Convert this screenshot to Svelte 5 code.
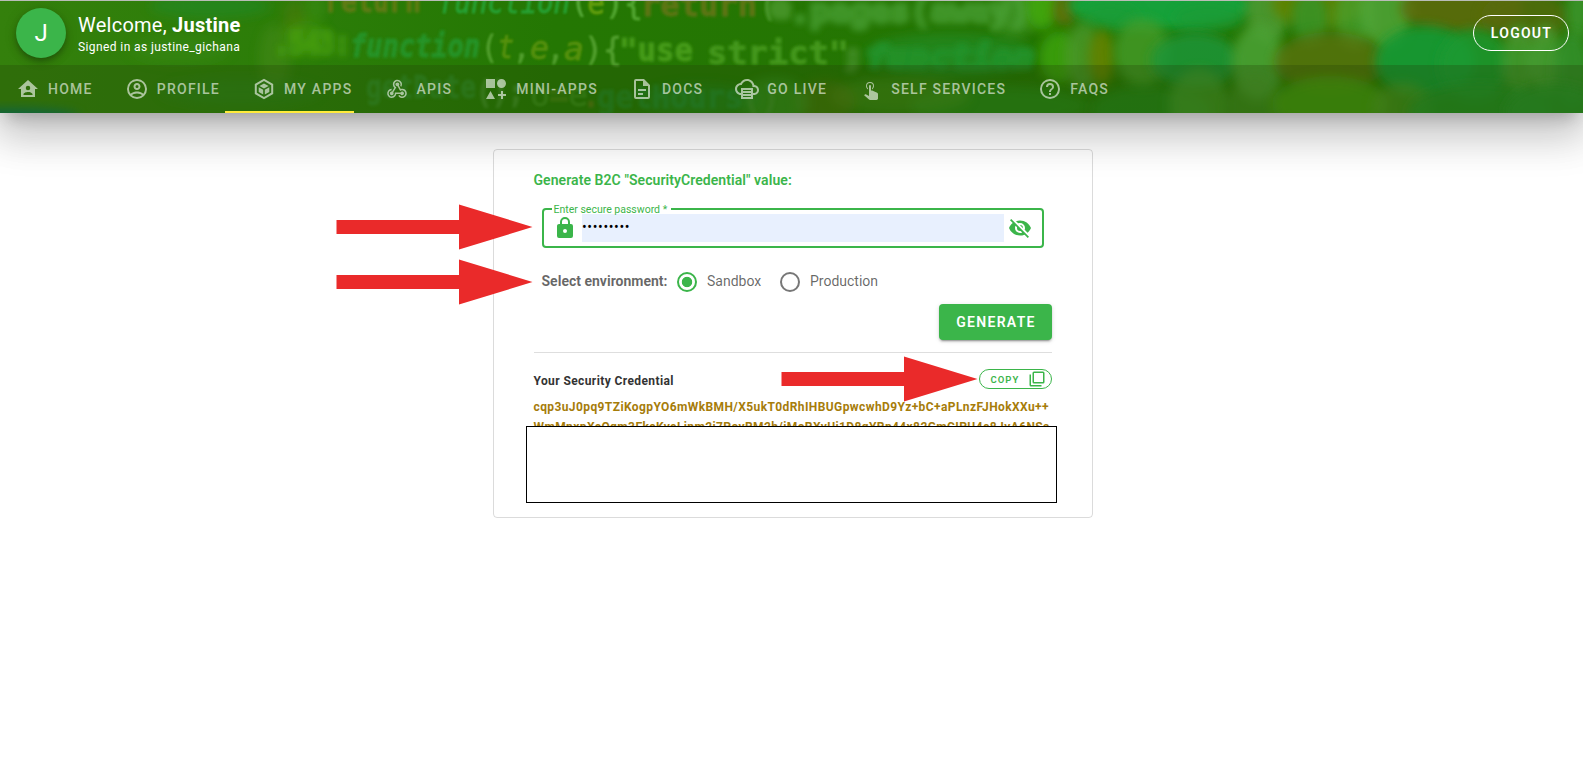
<script>
  const tabs = [
    { label: 'Home', d: 'M12,3L2,12H5V20H19V12H22L12,3M12,8.75A2.25,2.25 0 0,1 14.25,11A2.25,2.25 0 0,1 12,13.25A2.25,2.25 0 0,1 9.75,11A2.25,2.25 0 0,1 12,8.75M12,15C13.5,15 16.5,15.75 16.5,17.25V18H7.5V17.25C7.5,15.75 10.5,15 12,15Z' },
    { label: 'Profile', d: 'M12,2A10,10 0 0,0 2,12A10,10 0 0,0 12,22A10,10 0 0,0 22,12A10,10 0 0,0 12,2M7.07,18.28C7.5,17.38 10.12,16.5 12,16.5C13.88,16.5 16.5,17.38 16.93,18.28C15.57,19.36 13.86,20 12,20C10.14,20 8.43,19.36 7.07,18.28M18.36,16.83C16.93,15.09 13.46,14.5 12,14.5C10.54,14.5 7.07,15.09 5.64,16.83C4.62,15.5 4,13.82 4,12C4,7.59 7.59,4 12,4C16.41,4 20,7.59 20,12C20,13.82 19.38,15.5 18.36,16.83M12,6C10.06,6 8.5,7.56 8.5,9.5C8.5,11.44 10.06,13 12,13C13.94,13 15.5,11.44 15.5,9.5C15.5,7.56 13.94,6 12,6M12,11A1.5,1.5 0 0,1 10.5,9.5A1.5,1.5 0 0,1 12,8A1.5,1.5 0 0,1 13.5,9.5A1.5,1.5 0 0,1 12,11Z' },
    { label: 'My Apps', d: 'M12,1.8L21.2,7V17L12,22.2L2.8,17V7L12,1.8M12,4.1L4.8,8.2V15.8L12,19.9L19.2,15.8V8.2L12,4.1M12,6.4L16.6,8.9L12,11.4L7.4,8.9L12,6.4M6.7,10.2L11.2,12.7V17.5L6.7,14.9V10.2M17.3,10.2V14.9L12.8,17.5V12.7L17.3,10.2Z' },
    { label: 'APIs', d: 'M10.46,19C9,21.07 6.15,21.59 4.09,20.15C2.04,18.71 1.56,15.84 3,13.75C3.87,12.5 5.21,11.83 6.58,11.77L6.63,13.2C5.72,13.27 4.84,13.74 4.27,14.56C3.27,16 3.58,17.94 4.95,18.91C6.33,19.87 8.26,19.5 9.26,18.07C9.57,17.62 9.75,17.13 9.82,16.63V15.62L15.4,15.58L15.47,15.47C16,14.55 17.15,14.23 18.05,14.75C18.95,15.27 19.26,16.43 18.73,17.35C18.2,18.26 17.04,18.58 16.14,18.06C15.73,17.83 15.44,17.46 15.31,17.04L11.24,17.06C11.13,17.73 10.87,18.38 10.46,19M17.74,11.86C20.27,12.17 22.07,14.44 21.76,16.93C21.45,19.43 19.15,21.2 16.62,20.89C15.13,20.71 13.9,19.86 13.19,18.68L14.43,17.96C14.92,18.73 15.75,19.28 16.75,19.41C18.5,19.62 20.05,18.43 20.26,16.76C20.47,15.09 19.23,13.56 17.5,13.35C16.96,13.29 16.44,13.36 15.97,13.53L15.12,13.97L12.54,9.2H12.32C11.26,9.16 10.41,8.29 10.44,7.25C10.47,6.21 11.4,5.4 12.45,5.44C13.5,5.5 14.33,6.35 14.3,7.39C14.28,7.83 14.11,8.23 13.84,8.54L15.74,12.05C16.36,11.85 17.04,11.78 17.74,11.86M8.25,9.14C7.25,6.79 8.31,4.1 10.62,3.12C12.94,2.14 15.62,3.25 16.62,5.6C17.21,6.97 17.09,8.47 16.42,9.67L15.18,8.95C15.6,8.14 15.67,7.15 15.27,6.22C14.59,4.62 12.78,3.85 11.23,4.5C9.67,5.16 8.97,7 9.65,8.6C9.93,9.26 10.4,9.77 10.97,10.11L11.36,10.32L8.29,15.31C8.32,15.36 8.36,15.42 8.39,15.5C8.88,16.41 8.54,17.56 7.62,18.05C6.71,18.54 5.56,18.18 5.06,17.24C4.57,16.31 4.91,15.16 5.83,14.67C6.22,14.46 6.65,14.41 7.06,14.5L9.37,10.73C8.9,10.3 8.5,9.76 8.25,9.14Z' },
    { label: 'Mini-Apps', d: 'M2,2H11V11H2V2M17.5,2C20,2 22,4 22,6.5C22,9 20,11 17.5,11C15,11 13,9 13,6.5C13,4 15,2 17.5,2M6.5,14L11,22H2L6.5,14M19,17H22V19H19V22H17V19H14V17H17V14H19V17Z' },
    { label: 'Docs', d: 'M6,2A2,2 0 0,0 4,4V20A2,2 0 0,0 6,22H18A2,2 0 0,0 20,20V8L14,2H6M6,4H13V9H18V20H6V4M8,12V14H16V12H8M8,16V18H13V16H8Z' },
    { label: 'Go Live', d: 'M19.35,8.03C18.67,4.59 15.64,2 12,2C9.11,2 6.6,3.64 5.35,6.04C2.34,6.36 0,8.91 0,12C0,15.3 2.7,18 6,18V22H18V18H19C21.76,18 24,15.76 24,13C24,10.36 21.95,8.22 19.35,8.03M19,16H18V11H6V16C3.8,16 2,14.2 2,12C2,9.8 3.8,8 6,8H6.7C7.4,5.7 9.5,4 12,4C15,4 17.5,6.5 17.5,9.5V10H19C20.7,10 22,11.3 22,13C22,14.7 20.7,16 19,16M8,13H16V14H8V13M8,16H16V17H8V16M8,19H16V20H8V19Z' },
    { label: 'Self Services', d: 'M10,9A1,1 0 0,1 11,8A1,1 0 0,1 12,9V13.47L13.21,13.6L18.15,15.79C18.68,16.03 19,16.56 19,17.14V21.5C18.97,22.32 18.32,22.97 17.5,23H11C10.62,23 10.26,22.85 10,22.57L5.1,18.37L5.84,17.6C6.03,17.39 6.3,17.28 6.58,17.28H6.8L10,19V9M11,5A4,4 0 0,1 15,9C15,10.5 14.2,11.77 13,12.46V11.24C13.61,10.69 14,9.89 14,9A3,3 0 0,0 11,6A3,3 0 0,0 8,9C8,9.89 8.39,10.69 9,11.24V12.46C7.8,11.77 7,10.5 7,9A4,4 0 0,1 11,5Z' },
    { label: 'FAQs', d: 'M11,18H13V16H11V18M12,2A10,10 0 0,0 2,12A10,10 0 0,0 12,22A10,10 0 0,0 22,12A10,10 0 0,0 12,2M12,20C7.59,20 4,16.41 4,12C4,7.59 7.59,4 12,4C16.41,4 20,7.59 20,12C20,16.41 16.41,20 12,20M12,6A4,4 0 0,0 8,10H10A2,2 0 0,1 12,8A2,2 0 0,1 14,10C14,12 11,11.75 11,15H13C13,12.75 16,12.5 16,10A4,4 0 0,0 12,6Z' }
  ];

  // Out-of-focus source code drawn behind the header: text, x, baseline, width, colour, blur level, italic
  const code = [
    ['return', 325, 12, 96, '#6a7c14', 2, 0],
    ['function', 438, 13, 132, '#28a83c', 1, 1],
    ['(', 571, 12, 17, '#62b344', 1, 0],
    ['e', 587, 14, 18, '#6fa60c', 1, 0],
    ['){', 605, 14, 38, '#5aae38', 1, 0],
    ['return', 641, 16, 116, '#687614', 2, 0],
    ['(', 761, 16, 14, '#4f9c30', 2, 0],
    ['e', 769, 18, 22, '#4f9c30', 3, 0],
    ['.pages(away)', 790, 22, 240, '#4aa034', 3, 0],
    ['.543:', 274, 54, 76, '#479f10', 3, 0],
    ['function', 350, 57, 130, '#25992f', 2, 1],
    ['(', 481, 58, 17, '#5aa636', 1, 0],
    ['t', 498, 58, 16, '#5f960d', 1, 1],
    [',', 513, 59, 17, '#5aa636', 1, 0],
    ['e', 530, 59, 19, '#5f960d', 1, 1],
    [',', 547, 60, 17, '#5aa636', 1, 0],
    ['a', 564, 60, 20, '#5f960d', 1, 1],
    ['){', 584, 60, 38, '#5aa636', 1, 0],
    ['"use', 619, 61, 74, '#4da31d', 2, 0],
    ['strict"', 707, 64, 142, '#4a9d20', 2, 0],
    [';', 840, 67, 26, '#46922b', 3, 0],
    ['function', 866, 68, 168, '#22962e', 3, 1],
    ['getDate', 366, 98, 110, '#36993c', 2, 0],
    ['();', 476, 103, 48, '#55a040', 2, 0],
    ['o', 530, 106, 20, '#4a9c28', 1, 0],
    ['=', 549, 106, 20, '#5c8a18', 2, 0],
    ['e', 568, 106, 20, '#4a9c28', 1, 0],
    ['.', 583, 107, 16, '#7a7a16', 2, 0],
    ['getHours', 597, 108, 146, '#22903a', 2, 0],
    ['()', 742, 109, 38, '#42902b', 2, 0]
  ];

  // Bokeh spots: cx, cy, rx, ry, colour, opacity
  const spots = [
    [210, 6, 60, 12, '#1f8c2e', 0.5], [295, 20, 12, 20, '#64780f', 0.35], [315, 8, 10, 14, '#45951f', 0.4], [275, 58, 16, 34, '#4c8d1e', 0.45],
    [305, 38, 22, 18, '#429807', 0.55], [180, 50, 50, 14, '#398912', 0.5], [240, 92, 80, 14, '#2a8626', 0.35], [10, 117, 70, 8, '#067060', 0.9],
    [1015, 12, 22, 24, '#4ba236', 0.6], [1042, 6, 16, 24, '#43a80c', 0.9], [1065, 10, 12, 16, '#6d7010', 0.8],
    [1160, 5, 92, 25, '#17a43e', 0.95], [1110, 18, 30, 14, '#1a9a35', 0.6], [1210, 18, 36, 14, '#1a9a35', 0.6],
    [950, 55, 85, 22, '#219432', 0.5], [1059, 57, 20, 26, '#3da507', 0.8], [1083, 56, 18, 34, '#4c9829', 0.8], [1102, 57, 13, 28, '#648206', 0.9],
    [1142, 52, 28, 34, '#479e2c', 0.75], [1195, 60, 44, 28, '#1b9539', 0.85], [1000, 106, 90, 20, '#279420', 0.5], [900, 96, 70, 18, '#48911a', 0.5],
    [1268, 10, 22, 32, '#55a13a', 0.75], [1320, 4, 48, 24, '#608202', 0.9], [1310, 18, 18, 28, '#36952a', 0.8], [1354, 17, 20, 32, '#46a332', 0.7], [1386, 12, 26, 38, '#52a83b', 0.8],
    [1462, 8, 62, 26, '#646a0e', 0.8], [1525, 17, 44, 26, '#586b09', 0.75], [1578, 12, 12, 28, '#3a952c', 0.9],
    [1258, 62, 26, 38, '#4ba234', 0.85], [1330, 62, 56, 30, '#5a720c', 0.8], [1425, 62, 50, 36, '#189a35', 0.9], [1475, 65, 36, 36, '#1f9a30', 0.8],
    [1519, 63, 17, 38, '#479f36', 0.75], [1545, 62, 17, 38, '#4ba33b', 0.75], [1572, 70, 18, 38, '#349631', 0.75],
    [1150, 110, 60, 24, '#249326', 0.5], [1199, 105, 30, 36, '#479a2a', 0.65], [1255, 107, 28, 32, '#469326', 0.6],
    [1330, 104, 58, 28, '#449a0d', 0.85], [1402, 108, 30, 26, '#4b9523', 0.65], [1480, 112, 72, 28, '#249126', 0.8], [1555, 112, 50, 28, '#259028', 0.9],
    [825, 102, 30, 22, '#5f750d', 0.4], [775, 102, 34, 24, '#3d9c2b', 0.45], [700, 100, 60, 16, '#1f8c30', 0.35]
  ];

  const arrows = [{ x: 336, y: 204 }, { x: 336, y: 259 }, { x: 781, y: 356 }];
</script>

<div class="page">
  <header>
    <svg class="backdrop" width="1583" height="113" viewBox="0 0 1583 113" aria-hidden="true">
      <defs>
        <linearGradient id="base"><stop offset="0" stop-color="#34800c" /><stop offset=".2" stop-color="#2b7d08" /><stop offset=".35" stop-color="#247703" /><stop offset="1" stop-color="#257202" /></linearGradient>
        <filter id="b1" x="-30%" y="-30%" width="160%" height="160%"><feGaussianBlur stdDeviation=".8" /></filter>
        <filter id="b2" x="-30%" y="-30%" width="160%" height="160%"><feGaussianBlur stdDeviation="1.8" /></filter>
        <filter id="b3" x="-30%" y="-30%" width="160%" height="160%"><feGaussianBlur stdDeviation="3" /></filter>
        <filter id="b5" x="-50%" y="-50%" width="200%" height="200%"><feGaussianBlur stdDeviation="5.5" /></filter>
      </defs>
      <rect width="1583" height="113" fill="url(#base)" />
      {#each spots as [cx, cy, rx, ry, fill, o]}
        <ellipse {cx} {cy} {rx} {ry} {fill} opacity={o} filter="url(#b5)" />
      {/each}
      {#each code as [text, x, y, w, fill, blur, italic]}
        <text {x} {y} {fill} textLength={w} lengthAdjust="spacingAndGlyphs" font-size="32" font-style={italic ? 'italic' : 'normal'} font-weight={blur > 1 ? 700 : 400} stroke={fill} stroke-width={blur === 3 ? 4 : 0.9} filter={`url(#b${blur})`} opacity={y > 90 ? 0.5 : blur === 3 ? 0.75 : 0.85}>{text}</text>
      {/each}
    </svg>
    <div class="top">
      <div class="avatar">J</div>
      <div class="who">
        <div class="welcome">Welcome, <b>Justine</b></div>
        <div class="signed">Signed in as justine_gichana</div>
      </div>
      <button class="logout">Logout</button>
    </div>
    <nav>
      {#each tabs as tab}
        <a href="#top"><svg width="24" height="24" viewBox="0 0 24 24"><path fill-rule="evenodd" d={tab.d} /></svg>{tab.label}</a>
      {/each}
      <span class="slider"></span>
    </nav>
  </header>

  <main class="card">
    <h1>Generate B2C "SecurityCredential" value:</h1>
    <div class="field">
      <span class="legend">Enter secure password *</span>
      <svg width="24" height="24" viewBox="0 0 24 24"><path d="M12,17A2,2 0 0,0 14,15C14,13.89 13.1,13 12,13A2,2 0 0,0 10,15A2,2 0 0,0 12,17M18,8A2,2 0 0,1 20,10V20A2,2 0 0,1 18,22H6A2,2 0 0,1 4,20V10C4,8.89 4.9,8 6,8H7V6A5,5 0 0,1 12,1A5,5 0 0,1 17,6V8H18M12,3A3,3 0 0,0 9,6V8H15V6A3,3 0 0,0 12,3Z" /></svg>
      <div class="value">•••••••••</div>
      <svg width="24" height="24" viewBox="0 0 24 24"><path d="M11.83,9L15,12.16C15,12.11 15,12.05 15,12A3,3 0 0,0 12,9C11.94,9 11.89,9 11.83,9M7.53,9.8L9.08,11.35C9.03,11.56 9,11.77 9,12A3,3 0 0,0 12,15C12.22,15 12.44,14.97 12.65,14.92L14.2,16.47C13.53,16.8 12.79,17 12,17A5,5 0 0,1 7,12C7,11.21 7.2,10.47 7.53,9.8M2,4.27L4.28,6.55L4.73,7C3.08,8.3 1.78,10 1,12C2.73,16.39 7,19.5 12,19.5C13.55,19.5 15.03,19.2 16.38,18.66L16.81,19.08L19.73,22L21,20.73L3.27,3M12,7A5,5 0 0,1 17,12C17,12.64 16.87,13.26 16.64,13.82L19.57,16.75C21.07,15.5 22.27,13.86 23,12C21.27,7.61 17,4.5 12,4.5C10.6,4.5 9.26,4.75 8,5.2L10.17,7.35C10.74,7.13 11.35,7 12,7Z" /></svg>
    </div>
    <div class="env">
      <b>Select environment:</b>
      <span class="radio on"></span><span class="opt">Sandbox</span>
      <span class="radio"></span><span>Production</span>
    </div>
    <button class="generate">Generate</button>
    <hr />
    <div class="result">
      <h2>Your Security Credential</h2>
      <button class="copy">Copy <svg width="18" height="18" viewBox="0 0 24 24"><path d="M20,2H8A2,2 0 0,0 6,4V16A2,2 0 0,0 8,18H20A2,2 0 0,0 22,16V4A2,2 0 0,0 20,2M20,16H8V4H20V16M4,6H2V20A2,2 0 0,0 4,22H18V20H4V6Z" /></svg></button>
    </div>
    <div class="cred">
      <div>cqp3uJ0pq9TZiKogpYO6mWkBMH/X5ukT0dRhIHBUGpwcwhD9Yz+bC+aPLnzFJHokXXu++</div>
      <div>WmMnxpXcQgm3EkcKyeLjnm2j7PoyRM2h/jMoRXvUj1D8qYRp44x82GmCIPU4e8JvA6NSs</div>
    </div>
    <div class="mask"></div>
  </main>

  {#each arrows as a}
    <svg class="arrow" style="left:{a.x}px;top:{a.y}px" width="197" height="46" viewBox="0 0 197 46"><path d="M.5 16H123V.4L196.5 23L123 45.6V30H.5Z" /></svg>
  {/each}
</div>

<style>
  :global(body) { background: #fff; }
  .page { position: relative; height: 780px; overflow: hidden; font-family: Roboto, sans-serif; }
  .page, .page * { box-sizing: border-box; }
  button { font-family: inherit; text-transform: uppercase; background: none; padding: 0; }
  header {
    position: relative; height: 113px; color: #fff;
    box-shadow: 0 11px 15px -7px rgba(0,0,0,.2), 0 24px 38px 3px rgba(0,0,0,.14), 0 9px 46px 8px rgba(0,0,0,.12);
  }
  .backdrop { position: absolute; inset: 0; font-family: "DejaVu Sans Mono", monospace; }
  header::after { content: ''; position: absolute; left: 0; right: 0; top: 0; height: 1px; background: #b9bdb7; }
  .top { position: relative; height: 65px; padding: 1px 14px 0 16px; display: flex; align-items: center; }
  .avatar {
    width: 50px; height: 50px; border-radius: 50%; background: #3bb54a; font-size: 24px; line-height: 50px; text-align: center;
    box-shadow: 0 3px 5px -1px rgba(0,0,0,.2), 0 5px 8px rgba(0,0,0,.14), 0 1px 14px rgba(0,0,0,.12);
  }
  .who { margin-left: 12px; padding-top: 4px; flex: 1; }
  .welcome { font-size: 20px; line-height: 24px; letter-spacing: .25px; }
  .welcome b { font-weight: 700; }
  .signed { font-size: 12px; line-height: 20px; letter-spacing: .4px; }
  .logout { width: 96px; height: 36px; border: 1px solid #fff; border-radius: 18px; color: #fff; font-size: 14px; font-weight: 600; letter-spacing: 1.25px; padding-left: 1px; }
  nav { position: relative; height: 48px; display: flex; background: rgba(38,64,8,.27); }
  nav a {
    display: flex; align-items: center; gap: 8px; padding: 0 16px; color: rgba(255,255,255,.6); text-decoration: none;
    text-transform: uppercase; font-size: 14px; font-weight: 500; letter-spacing: 1.25px; white-space: nowrap;
  }
  nav svg { fill: currentColor; }
  .slider { position: absolute; left: 225px; bottom: 0; width: 129px; height: 2px; background: #ffeb3b; }
  .card { position: relative; width: 600px; height: 369px; margin: 36px 0 0 493px; padding: 19px 40px 0 39.5px; border: 1px solid rgba(0,0,0,.14); border-radius: 4px; }
  h1 { margin: 0; font-size: 14px; line-height: 22px; font-weight: 600; letter-spacing: .07px; color: #3bb54a; }
  .field { position: relative; margin: 17px 8px 0; height: 40px; border: 2px solid #3bb54a; border-radius: 4px; display: flex; align-items: center; padding: 0 10px 0 9.5px; }
  .field svg { fill: #3bb54a; flex: none; }
  .value { flex: 1; height: 28px; margin: 0 4px 0 5px; background: #e8f0fe; color: #000; font-size: 14px; line-height: 26px; letter-spacing: .63px; }
  .legend { position: absolute; left: 8px; top: -7px; padding: 0 4px 0 2px; background: linear-gradient(#fff 11px, transparent 11px); color: #3bb54a; font-size: 10.5px; line-height: 13px; white-space: nowrap; }
  .env { height: 22px; margin: 22px 8px 0; display: flex; align-items: center; font-size: 14px; color: rgba(0,0,0,.6); }
  .env b { width: 135.5px; font-weight: 700; }
  .radio { width: 20px; height: 20px; border: 2px solid #777; border-radius: 50%; margin-right: 10px; position: relative; top: .5px; }
  .radio.on { border-color: #3bb54a; background: radial-gradient(circle, #3bb54a 4.8px, transparent 5.6px); }
  .opt { width: 73px; }
  .generate {
    display: block; margin: 12px 0 0 auto; width: 113px; height: 36px; border: 0; border-radius: 4px; background: #3bb54a; color: #fff;
    font-size: 14px; font-weight: 600; letter-spacing: 1.3px; padding-left: 1px;
    box-shadow: 0 3px 1px -2px rgba(0,0,0,.2), 0 2px 2px rgba(0,0,0,.14), 0 1px 5px rgba(0,0,0,.12);
  }
  hr { margin: 12px 0 0; border: 0; height: 1px; background: #dedede; }
  .result { display: flex; justify-content: space-between; align-items: center; margin-top: 16px; height: 20px; }
  h2 { margin: 3px 0 0; font-size: 12px; line-height: 16px; font-weight: 700; letter-spacing: .4px; color: #333; }
  .copy { width: 73px; height: 20px; border: 1px solid #3bb54a; border-radius: 10px; color: #3bb54a; font-size: 9.5px; font-weight: 600; letter-spacing: 1.05px; display: flex; align-items: center; justify-content: space-between; padding: 0 5px 0 10.5px; }
  .copy svg { fill: currentColor; }
  .cred { margin-top: 8px; font-size: 12px; line-height: 20px; font-weight: 700; letter-spacing: .4px; color: #a67c0a; white-space: nowrap; }
  .mask { position: absolute; left: 32px; top: 276px; width: 531px; height: 77px; border: 1px solid #000; background: #fff; }
  .arrow { position: absolute; fill: #ea2a2a; }
</style>
